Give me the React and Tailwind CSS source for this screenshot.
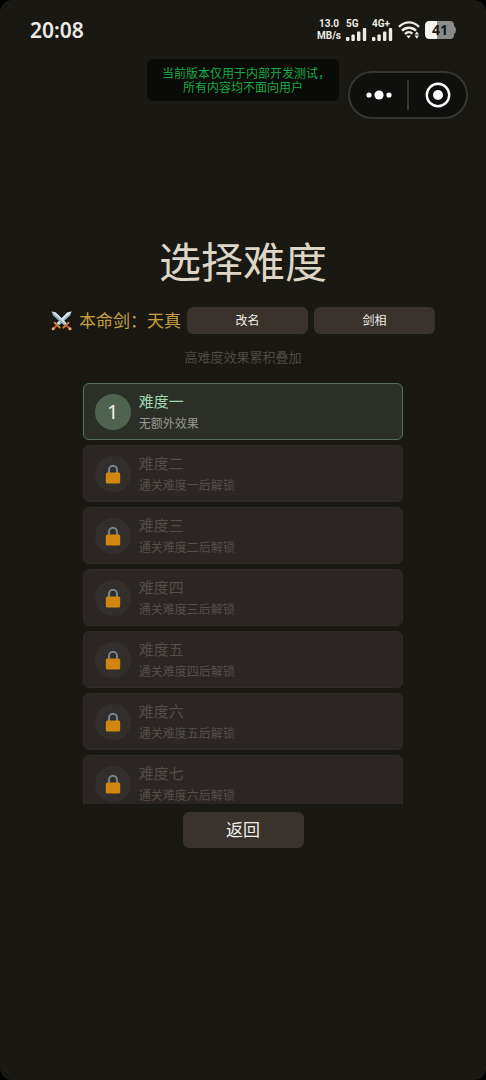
const LEVELS = [
  { id: 1, name: "难度一", desc: "无额外效果", unlocked: true },
  { id: 2, name: "难度二", desc: "通关难度一后解锁" },
  { id: 3, name: "难度三", desc: "通关难度二后解锁" },
  { id: 4, name: "难度四", desc: "通关难度三后解锁" },
  { id: 5, name: "难度五", desc: "通关难度四后解锁" },
  { id: 6, name: "难度六", desc: "通关难度五后解锁" },
  { id: 7, name: "难度七", desc: "通关难度六后解锁" },
];

function SignalIcon() {
  return (
    <svg viewBox="0 0 21 13" className="w-[21px] h-[13px]" fill="currentColor">
      <rect x="0" y="9" width="3.4" height="4" rx="1" />
      <rect x="5.4" y="6.5" width="3.4" height="6.5" rx="1" />
      <rect x="11" y="3.5" width="3.4" height="9.5" rx="1" />
      <rect x="16.8" y="0" width="3.4" height="13" rx="1" />
    </svg>
  );
}

function WifiIcon() {
  return (
    <svg viewBox="0 0 22 18" className="w-[22px] h-[18px]" fill="none" stroke="currentColor" strokeWidth="2.4">
      <path d="M1 5.8C7-.1 15-.1 21 5.8" />
      <path d="M4 9.6c4-3.9 10-3.9 14 0" />
      <path d="M7 13c2.2-2.3 5.4-2.3 7.4-.4" />
      <path d="M8.2 14.6h4.8L10.6 17.6z" fill="currentColor" stroke="none" />
      <path d="M18.8 10.4l2.2 3.2h-4.4zM18.8 17.8l2.2-3.2h-4.4z" fill="currentColor" stroke="none" />
    </svg>
  );
}

function BatteryIcon() {
  return (
    <svg viewBox="0 0 31 18" className="w-[31px] h-[18px]">
      <path d="M5 0h20q4 0 4 4v1q2 1 2 4t-2 4v1q0 4-4 4H5q-5 0-5-5V5q0-5 5-5z" fill="#8b8b89" />
      <path d="M12 0H5Q0 0 0 5v8q0 5 5 5h7z" fill="#f4f4f2" />
      <text x="15" y="14" textAnchor="middle" fill="#171713" className="text-[14px] font-bold">41</text>
    </svg>
  );
}

function SwordsIcon() {
  return (
    <svg viewBox="0 0 22 22" className="w-[22px] h-[22px] shrink-0">
      <path d="M20.6 1.4l-4.2 1.2L5.6 13.2l2.4 2.4L19.2 5.4z" fill="#9fb9ca" />
      <path d="M20.6 1.4L6.8 14.4l-1.2-1.2L16.4 2.6z" fill="#dbe8f0" />
      <path d="M.6 1.4l4.2 1.2 10.8 10.6-2.4 2.4L2 5.4z" fill="#8fabbe" />
      <path d="M.6 1.4l13.8 13 1.2-1.2L4.8 2.6z" fill="#cfe0ea" />
      <path d="M3.6 12.6l5.2 5M17.6 12.6l-5.2 5" stroke="#e08a3a" strokeWidth="1.8" strokeLinecap="round" />
      <path d="M6 15.2l-3.4 3.2M15.2 15.2l3.4 3.2" stroke="#c4582f" strokeWidth="2" />
      <circle cx="2.2" cy="18.8" r="1.5" fill="#f0b070" />
      <circle cx="19" cy="18.8" r="1.5" fill="#f0b070" />
    </svg>
  );
}

function LockIcon() {
  return (
    <svg viewBox="0 0 16 20" className="w-4 h-5">
      <path d="M4 9.5V6a4 4.2 0 0 1 8 0v3.5" fill="none" stroke="#768591" strokeWidth="2" />
      <rect x="0.8" y="8.4" width="14.4" height="11.2" rx="1.6" fill="#d08611" />
    </svg>
  );
}

function StatusBar() {
  return (
    <div className="flex items-center justify-between h-[60px] px-[30px] text-[#ecebe6]">
      <span className="text-[21px] leading-6 font-semibold">20:08</span>
      <div className="flex items-center gap-[5px]">
        <div className="text-center font-[Roboto] text-[10px] leading-3 font-bold">
          <div>13.0</div>
          <div>MB/s</div>
        </div>
        <div className="flex flex-col">
          <span className="font-[Roboto] text-[10px] leading-[8px] font-bold">5G</span>
          <SignalIcon />
        </div>
        <div className="flex flex-col">
          <span className="font-[Roboto] text-[10px] leading-[8px] font-bold">4G+</span>
          <SignalIcon />
        </div>
        <WifiIcon />
        <BatteryIcon />
      </div>
    </div>
  );
}

function Header() {
  return (
    <div className="-mt-px grid grid-cols-[1fr_auto_1fr] items-start">
      <p className="col-start-2 w-[192px] h-[42px] pt-2 rounded-md bg-[#0a0a08] text-center font-['Liberation_Sans','Noto_Sans_CJK_SC',sans-serif] text-[12px] leading-[14px] text-[#17aa44]">
        当前版本仅用于内部开发测试<span className="[font-feature-settings:'halt']">，</span>
        <br />
        所有内容均不面向用户
      </p>
      <div className="justify-self-end mt-3 mr-[18px] flex items-center w-[120px] h-[48px] rounded-full border-2 border-[#353532] bg-[#0f0f0d]">
        <button aria-label="更多" className="flex-1 flex justify-center">
          <svg viewBox="0 0 28 10" className="w-7 h-[10px]" fill="#fff">
            <circle cx="4" cy="5" r="2.6" />
            <circle cx="14" cy="5" r="4.6" />
            <circle cx="24" cy="5" r="2.6" />
          </svg>
        </button>
        <div className="w-[2px] h-[30px] bg-[#353532]" />
        <button aria-label="关闭" className="flex-1 flex justify-center">
          <svg viewBox="0 0 26 26" className="w-[26px] h-[26px]">
            <circle cx="13" cy="13" r="11.2" fill="none" stroke="#fff" strokeWidth="2.4" />
            <circle cx="13" cy="13" r="5" fill="#fff" />
          </svg>
        </button>
      </div>
    </div>
  );
}

function LevelCard({ level }) {
  if (level.unlocked) {
    return (
      <button className="flex items-center gap-2 w-full h-[57px] shrink-0 px-[11px] rounded-md border border-[#56705f] bg-[#2b2f28] text-left">
        <span className="flex items-center justify-center size-9 rounded-full bg-[#4f6350] text-[20px] text-[#f2f2ee]">
          {level.id}
        </span>
        <span className="flex flex-col gap-[5px]">
          <span className="text-[15px] leading-[19px] text-[#9fd8ae]">{level.name}</span>
          <span className="text-[12px] leading-[16px] text-[#98978f]">{level.desc}</span>
        </span>
      </button>
    );
  }

  return (
    <button disabled className="flex items-center gap-2 w-full h-[57px] shrink-0 px-[11px] rounded-md border border-[#302c28] bg-[#2b2623] text-left">
      <span className="flex items-center justify-center size-9 rounded-full bg-[#322e2c]">
        <LockIcon />
      </span>
      <span className="flex flex-col gap-[5px]">
        <span className="text-[15px] leading-[19px] text-[#524d49]">{level.name}</span>
        <span className="text-[12px] leading-[16px] text-[#544f4b]">{level.desc}</span>
      </span>
    </button>
  );
}

export default function App() {
  return (
    <div className="min-h-screen bg-black">
      <div className="min-h-screen rounded-xl bg-[#191813] font-['Noto_Sans','Noto_Sans_CJK_SC',sans-serif]">
        <StatusBar />
        <Header />

        <main className="flex flex-col items-center pt-[113px]">
          <h1 className="text-[42px] leading-[60px] text-[#ddd6c6]">选择难度</h1>

          {/* 本命剑 */}
          <div className="flex items-center gap-[6px] mt-[15px]">
            <SwordsIcon />
            <span className="text-[17px] leading-6 text-[#c9a23f]">本命剑：天真</span>
            <button className="w-[121px] h-[27px] rounded-md bg-[#3a322c] text-[12px] text-[#f0eeea]">改名</button>
            <button className="w-[121px] h-[27px] rounded-md bg-[#3a322c] text-[12px] text-[#f0eeea]">剑相</button>
          </div>

          <p className="mt-[13px] text-[13px] leading-5 text-[#4d4a44]">高难度效果累积叠加</p>

          {/* 难度列表 */}
          <div className="flex flex-col gap-[5px] w-[66%] h-[421px] mt-4 overflow-hidden">
            {LEVELS.map((level) => (
              <LevelCard key={level.id} level={level} />
            ))}
          </div>

          <button className="w-[121px] h-9 mt-2 rounded-md bg-[#3a322c] text-[17px] text-[#f0eeea]">返回</button>
        </main>
      </div>
    </div>
  );
}
